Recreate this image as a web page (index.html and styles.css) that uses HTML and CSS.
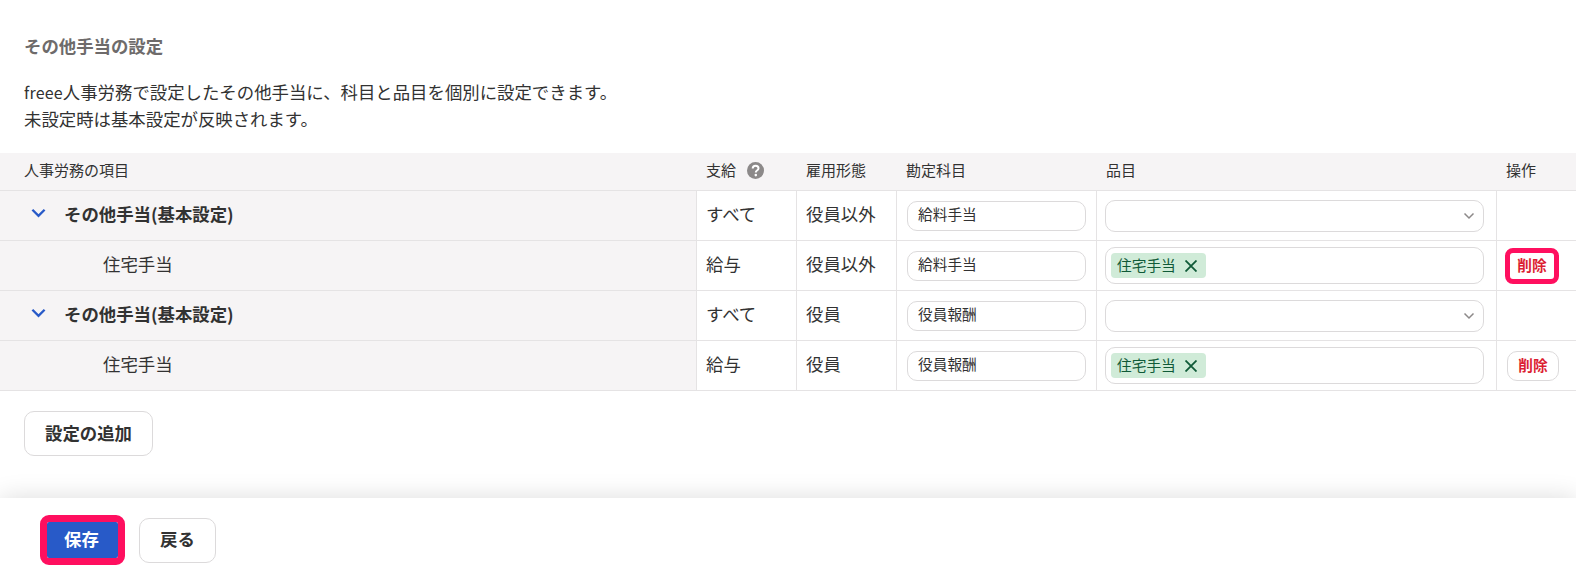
FILE: index.html
```html
<!DOCTYPE html>
<html lang="ja">
<head>
<meta charset="utf-8">
<title>その他手当の設定</title>
<link rel="stylesheet" href="styles.css">
</head>
<body>
<main class="main">
  <h2 class="title">その他手当の設定</h2>
  <p class="desc"><span class="latin">freee</span>人事労務で設定したその他手当に、科目と品目を個別に設定できます。<br>未設定時は基本設定が反映されます。</p>
  <table class="table">
    <colgroup><col class="c1"><col class="c2"><col class="c3"><col class="c4"><col class="c5"><col class="c6"></colgroup>
    <thead>
      <tr>
        <th class="first">人事労務の項目</th>
        <th><span class="help-wrap">支給<svg class="help" viewBox="0 0 17 17" aria-hidden="true"><circle cx="8.5" cy="8.5" r="8.5" fill="#8c8989"/><path d="M5.700 6.500C5.700 4.800 7 3.700 8.600 3.700c1.700 0 2.900 1 2.900 2.500 0 1.200-.7 1.800-1.500 2.300-.8.500-1.200 1-1.200 2" fill="none" stroke="#fff" stroke-width="2"/><circle cx="8.800" cy="13.100" r="1.300" fill="#fff"/></svg></span></th>
        <th>雇用形態</th>
        <th>勘定科目</th>
        <th>品目</th>
        <th>操作</th>
      </tr>
    </thead>
    <tbody>
      <tr>
        <td class="t name parent"><span class="parent-wrap"><svg class="chev" viewBox="0 0 16 10" aria-hidden="true"><path d="M1.500 1.500 8 8l6.500-6.500" fill="none" stroke="#285ac8" stroke-width="2.500"/></svg>その他手当(基本設定)</span></td>
        <td class="t">すべて</td><td class="t">役員以外</td>
        <td><div class="input">給料手当</div></td>
        <td><div class="select"><svg class="caret" viewBox="0 0 12 8" aria-hidden="true"><path d="M1.500 1.500 6 6l4.500-4.500" fill="none" stroke="#8c8989" stroke-width="1.500"/></svg></div></td>
        <td></td>
      </tr>
      <tr>
        <td class="t name child">住宅手当</td>
        <td class="t">給与</td><td class="t">役員以外</td>
        <td><div class="input">給料手当</div></td>
        <td><div class="multi"><span class="tag">住宅手当<svg class="x" viewBox="0 0 12 12" aria-hidden="true"><path d="M.5.500l11 11M11.500.500l-11 11" stroke="#0f5a37" stroke-width="1.800" fill="none"/></svg></span></div></td>
        <td><button class="del focus">削除</button></td>
      </tr>
      <tr>
        <td class="t name parent"><span class="parent-wrap"><svg class="chev" viewBox="0 0 16 10" aria-hidden="true"><path d="M1.500 1.500 8 8l6.500-6.500" fill="none" stroke="#285ac8" stroke-width="2.500"/></svg>その他手当(基本設定)</span></td>
        <td class="t">すべて</td><td class="t">役員</td>
        <td><div class="input">役員報酬</div></td>
        <td><div class="select"><svg class="caret" viewBox="0 0 12 8" aria-hidden="true"><path d="M1.500 1.500 6 6l4.500-4.500" fill="none" stroke="#8c8989" stroke-width="1.500"/></svg></div></td>
        <td></td>
      </tr>
      <tr>
        <td class="t name child">住宅手当</td>
        <td class="t">給与</td><td class="t">役員</td>
        <td><div class="input">役員報酬</div></td>
        <td><div class="multi"><span class="tag">住宅手当<svg class="x" viewBox="0 0 12 12" aria-hidden="true"><path d="M.5.500l11 11M11.500.500l-11 11" stroke="#0f5a37" stroke-width="1.800" fill="none"/></svg></span></div></td>
        <td><button class="del">削除</button></td>
      </tr>
    </tbody>
  </table>
  <button class="btn add">設定の追加</button>
</main>
<footer class="footer">
  <button class="save">保存</button>
  <button class="btn back">戻る</button>
</footer>
</body>
</html>
```
FILE: styles.css
```css
* { box-sizing: border-box; }
html, body { margin: 0; height: 100%; }
body {
  display: flex;
  flex-direction: column;
  height: 582px;
  overflow: hidden;
  background: #fff;
  color: #323232;
  font-family: "Noto Sans CJK JP", "Noto Sans", sans-serif;
  font-size: 17.4px;
}
button { font-family: inherit; cursor: pointer; }
.main { flex: 1; min-height: 0; }
.title {
  margin: 34px 24px 20px;
  font-size: 17.4px;
  line-height: 24px;
  font-weight: 700;
  color: #6e6b6b;
}
.desc {
  margin: 0 24px 21px;
  font-size: 17.4px;
  line-height: 27px;
}
.latin { font-size: 16px; line-height: 1; letter-spacing: .2px; }
.table {
  width: 1576px;
  table-layout: fixed;
  border-collapse: separate;
  border-spacing: 0;
}
.c1 { width: 696px; }
.c2, .c3 { width: 100px; }
.c4 { width: 200px; }
.c5 { width: 400px; }
.c6 { width: 80px; }
th {
  height: 38px;
  padding: 0 0 4px 10px;
  background: #f6f4f5;
  border-bottom: 1px solid #e5e3e4;
  font-size: 15px;
  font-weight: 400;
  text-align: left;
}
th.first { padding-left: 24px; }
.help-wrap { display: flex; align-items: center; gap: 11px; }
.help { width: 17px; height: 17px; margin-top: 2px; }
td {
  height: 50px;
  padding: 0 0 0 9px;
  border-bottom: 1px solid #e5e3e4;
  border-left: 1px solid #e5e3e4;
  font-size: 17.4px;
}
td.t { padding-bottom: 5px; }
td.name { background: #f6f4f5; border-left: 0; }
td.parent { padding-left: 31px; font-weight: 700; }
td.child { padding-left: 103px; }
.parent-wrap { display: flex; align-items: center; gap: 18px; }
.chev { width: 15px; height: 10px; }
.input {
  display: flex;
  align-items: center;
  width: 179px;
  height: 30px;
  margin-left: 1px;
  padding: 0 0 5px 10px;
  border: 1px solid #dcdadb;
  border-radius: 10px;
  font-size: 14.7px;
}
.select, .multi {
  width: 379px;
  margin-left: -1px;
  border: 1px solid #dcdadb;
  border-radius: 10px;
}
.select {
  display: flex;
  align-items: center;
  justify-content: flex-end;
  height: 32px;
  padding-right: 8px;
}
.caret { width: 12px; height: 8px; }
.multi {
  display: flex;
  align-items: center;
  height: 37px;
  padding-left: 5px;
}
.tag {
  display: inline-flex;
  align-items: center;
  gap: 9px;
  width: 95px;
  height: 25px;
  padding: 0 0 3px 6px;
  border-radius: 4px;
  background: #d0ebd8;
  color: #0f5a37;
  font-size: 14.7px;
}
.x { width: 12px; height: 12px; margin-top: 3px; }
.del {
  display: block;
  width: 52px;
  height: 30px;
  margin-left: 1px;
  padding: 0 0 2px;
  border: 1px solid #dcdadb;
  border-radius: 10px;
  background: #fff;
  color: #dc1e32;
  font-size: 14.7px;
  font-weight: 700;
}
.del.focus {
  width: 54px;
  height: 36px;
  margin-left: -1px;
  border: 5px solid #ff0f5f;
  border-radius: 8px;
}
.btn {
  height: 45px;
  padding: 0 0 2px;
  border: 1px solid #dcdadb;
  border-radius: 10px;
  background: #fff;
  color: #323232;
  font-size: 17.4px;
  font-weight: 700;
}
.add { display: block; width: 129px; margin: 20px 0 0 24px; }
.footer {
  position: relative;
  display: flex;
  align-items: center;
  gap: 14px;
  height: 84px;
  padding-left: 40px;
  background: #fff;
  box-shadow: 0 0 24px rgba(0, 0, 0, .14);
}
.save {
  width: 85px;
  height: 50px;
  padding: 0 2px 4px 0;
  border: 7px solid #ff0f5f;
  border-radius: 9px;
  background: #285ac8;
  background-clip: padding-box;
  color: #fff;
  font-size: 17.4px;
  font-weight: 700;
}
.btn.back { width: 77px; padding-bottom: 4px; }
```
